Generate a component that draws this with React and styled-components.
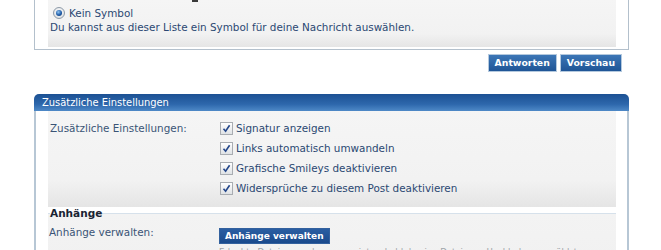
import React from "react";
import styled, { createGlobalStyle } from "styled-components";

const GlobalStyle = createGlobalStyle`
  body {
    margin: 0;
    background: #fff;
    font-family: Verdana, "DejaVu Sans", sans-serif;
    color: #2b4872;
  }
`;

const Page = styled.div`
  width: 595px;
  margin-left: 34px;
`;

// upper panel, its top edge is above the visible area
const TopPanel = styled.div`
  border: 1px solid #b3c0cc;
  border-top: none;
  padding: 0 12px 2px 13px;
`;

const Inset = styled.div`
  background: linear-gradient(#f5f5f5, #f2f2f2 72%, #e5e5e5);
  padding: ${(p) => p.$pad || "0 2px 13px"};
`;

const CutRow = styled.div`
  height: 6px;
  &::before {
    content: "";
    display: block;
    width: 6px;
    height: 2px;
    margin-left: 142px;
    background: #3a3a3a;
  }
`;

const RadioRow = styled.label`
  display: flex;
  align-items: center;
  gap: 4px;
  height: 14px;
  padding-left: 3px;
  font-size: 10.4px;
`;

const Radio = styled.span`
  position: relative;
  width: 10px;
  height: 10px;
  border-radius: 50%;
  border: 1px solid #8d9aa8;
  background: radial-gradient(circle at 50% 40%, #ffffff, #d4d8dc);
  &::after {
    content: "";
    position: absolute;
    left: 2px;
    top: 2px;
    width: 6px;
    height: 6px;
    border-radius: 50%;
    background: radial-gradient(circle at 40% 35%, #8fc4f2, #1d5aa6 55%, #0b2f66);
  }
`;

const Hint = styled.div`
  font-size: 10.4px;
  line-height: 14px;
`;

const ButtonRow = styled.div`
  display: flex;
  justify-content: flex-end;
  gap: 3px;
  margin-top: 4px;
  padding-right: 7px;
`;

const Button = styled.button`
  height: ${(p) => (p.$dark ? "16px" : "18px")};
  padding: 0 ${(p) => (p.$dark ? "5px" : "6px")};
  border: 1px solid ${(p) => (p.$dark ? "#33619e" : "#b4c9de")};
  background: ${(p) =>
    p.$dark
      ? "linear-gradient(#2a5ea2, #1a4a8c)"
      : "linear-gradient(#3c76b6, #1f5596)"};
  color: #fff;
  font-family: "DejaVu Sans", Verdana, sans-serif;
  font-weight: bold;
  font-size: ${(p) => (p.$dark ? "9px" : "9.3px")};
  line-height: 14px;
  cursor: pointer;
`;

const Panel = styled.div`
  margin-top: 22px;
`;

const PanelHead = styled.div`
  height: 17px;
  line-height: 17px;
  padding-left: 8px;
  border-radius: 5px 5px 0 0;
  background: linear-gradient(#1c5193, #2d67ac 60%, #4e89c7);
  color: #fff;
  font-family: Tahoma, "DejaVu Sans Condensed", "Liberation Sans", sans-serif;
  font-size: 11px;
`;

const PanelBody = styled.div`
  border-left: 2px solid #b7c7d5;
  border-right: 2px solid #b7c7d5;
  padding: 0 11px 0 12px;
`;

const FormRow = styled.div`
  display: grid;
  grid-template-columns: 170px 1fr;
  align-items: start;
`;

const Label = styled.div`
  font-size: 10.4px;
  line-height: ${(p) => p.$lh || "20px"};
  color: #3a5476;
`;

const CheckList = styled.div`
  display: flex;
  flex-direction: column;
`;

const CheckRow = styled.label`
  display: flex;
  align-items: center;
  gap: 3px;
  height: 20px;
  font-size: 10.4px;
`;

const Box = styled.span`
  display: flex;
  align-items: center;
  justify-content: center;
  width: 11px;
  height: 11px;
  border: 1px solid #a9adb2;
  background: linear-gradient(#ffffff, #dfe2e5);
`;

const Fieldset = styled.fieldset`
  margin: 0;
  padding: 0 2px 0;
  min-width: 0;
  border: none;
  border-top: 1px solid #d6e1eb;
  background: linear-gradient(#f3f3f3, #f1f1f1);
`;

const Legend = styled.legend`
  padding: 0;
  font-family: "DejaVu Sans", Verdana, sans-serif;
  font-size: 10.5px;
  font-weight: bold;
  line-height: 13px;
  color: #1a2433;
`;

const AttachRow = styled(FormRow)`
  margin-top: 4px;
  margin-left: -1px;
`;

const Small = styled.div`
  margin-top: 3px;
  font-size: 8.5px;
  line-height: 11px;
  color: #9ea3a8;
  white-space: nowrap;
`;

const Check = () => (
  <Box>
    <svg width="9" height="9" viewBox="0 0 9 9">
      <path d="M1.5 4.8 L3.6 7.2 L7.6 1.2" fill="none" stroke="#23468a" strokeWidth="1.6" />
    </svg>
  </Box>
);

const options = [
  "Signatur anzeigen",
  "Links automatisch umwandeln",
  "Grafische Smileys deaktivieren",
  "Widersprüche zu diesem Post deaktivieren",
];

export default function App() {
  return (
    <Page>
      <GlobalStyle />
      <TopPanel>
        <Inset>
          <CutRow />
          <RadioRow>
            <Radio />
            Kein Symbol
          </RadioRow>
          <Hint>Du kannst aus dieser Liste ein Symbol für deine Nachricht auswählen.</Hint>
        </Inset>
      </TopPanel>

      <ButtonRow>
        <Button>Antworten</Button>
        <Button>Vorschau</Button>
      </ButtonRow>

      <Panel>
        <PanelHead>Zusätzliche Einstellungen</PanelHead>
        <PanelBody>
          <Inset $pad="7px 2px 9px">
            <FormRow>
              <Label>Zusätzliche Einstellungen:</Label>
              <CheckList>
                {options.map((o) => (
                  <CheckRow key={o}>
                    <Check />
                    {o}
                  </CheckRow>
                ))}
              </CheckList>
            </FormRow>
          </Inset>
          <Fieldset>
            <Legend>Anhänge</Legend>
            <AttachRow>
              <Label $lh="16px">Anhänge verwalten:</Label>
              <div>
                <Button $dark>Anhänge verwalten</Button>
                <Small>
                  Erlaubte Dateien werden angezeigt, sobald du eine Datei zum Hochladen auswählst.
                </Small>
              </div>
            </AttachRow>
          </Fieldset>
        </PanelBody>
      </Panel>
    </Page>
  );
}
